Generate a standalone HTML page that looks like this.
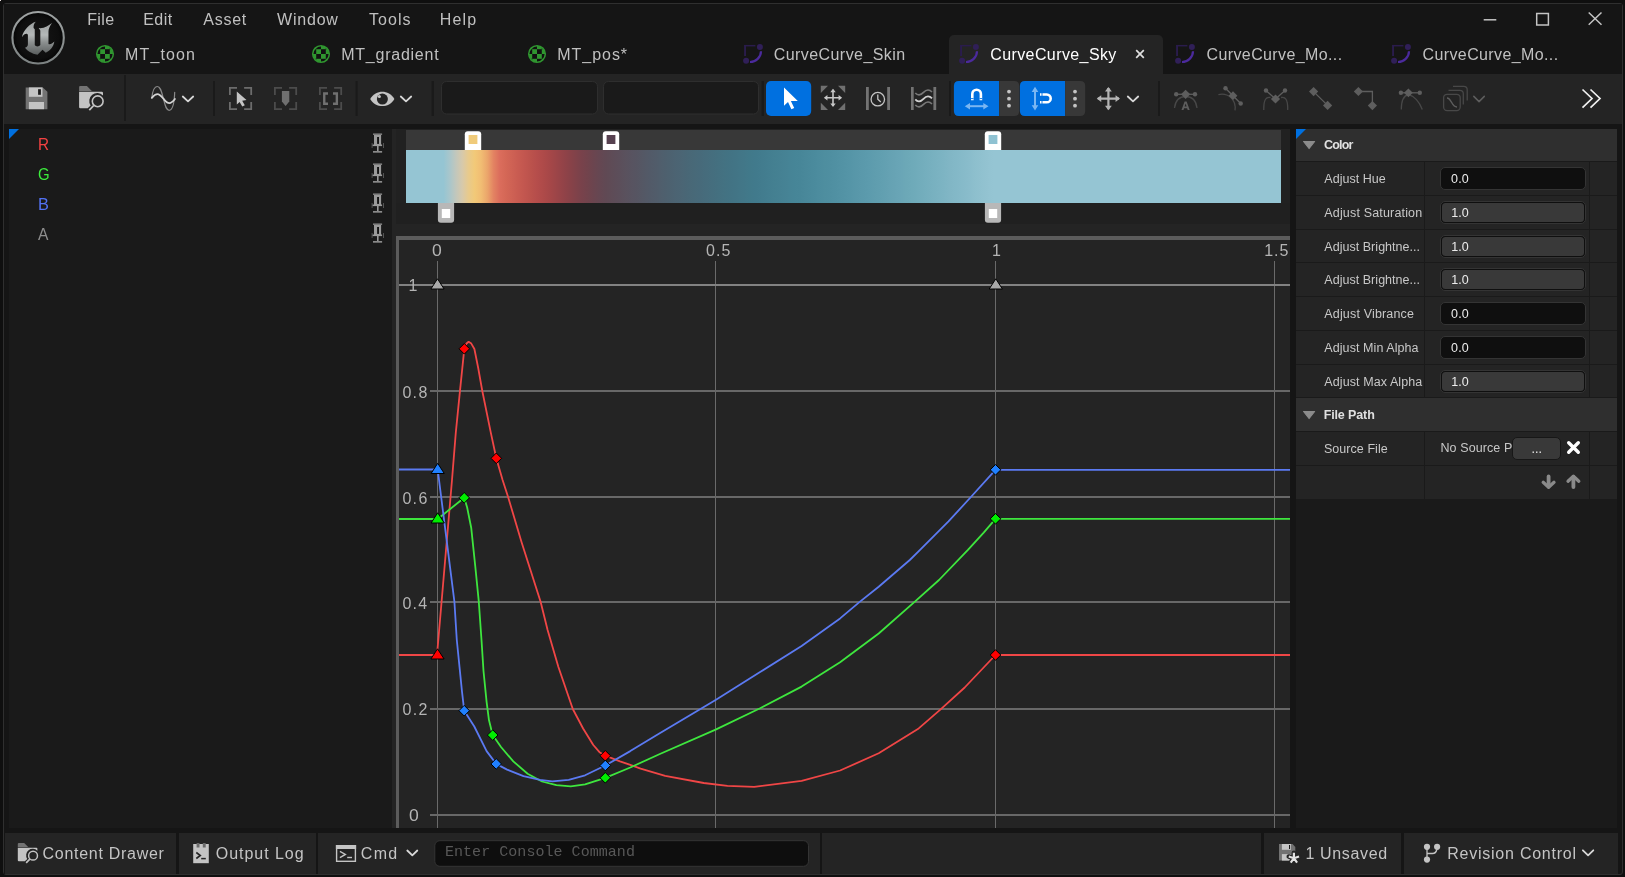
<!DOCTYPE html>
<html lang="en">
<head>
<meta charset="utf-8">
<title>CurveCurve_Sky</title>
<style>
*{box-sizing:border-box;margin:0;padding:0}
html,body{width:1625px;height:877px;overflow:hidden;background:#0f0f0f}
body{font-family:"Liberation Sans",sans-serif;color:#c0c0c0;position:relative;-webkit-font-smoothing:antialiased}
.abs{position:absolute}
#win{position:absolute;left:3px;top:3px;width:1620px;height:872px;border:1px solid #2f2f2f;border-radius:3px;background:#151515;overflow:hidden}
/* all children of #root are positioned in page coordinates */
#root{position:absolute;left:0;top:0;width:1625px;height:877px;will-change:transform}
.t{position:absolute;white-space:nowrap;line-height:1;transform-origin:0 0}
#titlebar{left:4px;top:4px;width:1618px;height:70px;background:#151515}
#toolbar{left:4px;top:74px;width:1618px;height:50px;background:#242424}
#leftpanel{left:9px;top:129px;width:383px;height:699px;background:#1a1a1a}
#midpanel{left:392px;top:129px;width:898px;height:699px;background:#242424}
#rightpanel{left:1296px;top:129px;width:321px;height:699px;background:#1a1a1a}
#statusbar{left:4px;top:833px;width:1614px;height:41px;background:#151515}
</style>
</head>
<body>
<div id="win"></div>
<div class="abs" style="left:0;top:0;width:1px;height:1px;background:#e8dede"></div>
<div id="root">
<div id="titlebar" class="abs"></div>
<div id="toolbar" class="abs"></div>
<div id="leftpanel" class="abs"></div>
<div id="midpanel" class="abs"></div>
<div id="rightpanel" class="abs"></div>
<div id="statusbar" class="abs"></div>
<svg class="abs" style="left:10px;top:10px;" width="56" height="56" viewBox="0 0 56 56">
<defs><linearGradient id="ug" x1="0" y1="0" x2="0" y2="1"><stop offset="0" stop-color="#9a9e9e"/><stop offset=".4" stop-color="#b4b8b8"/><stop offset=".62" stop-color="#8c9090"/><stop offset="1" stop-color="#5a5e5e"/></linearGradient>
<radialGradient id="ud" cx=".5" cy=".5" r=".5"><stop offset="0" stop-color="#161616"/><stop offset=".8" stop-color="#0e0e0e"/><stop offset="1" stop-color="#050505"/></radialGradient>
<linearGradient id="ur" x1="0" y1="0" x2="0" y2="1"><stop offset="0" stop-color="#a0a4a4"/><stop offset="1" stop-color="#7c8282"/></linearGradient></defs>
<circle cx="28.100" cy="27.750" r="25.700" fill="url(#ud)" stroke="url(#ur)" stroke-width="2.100"/>
<path fill="url(#ug)" d="M11.91 27.24C13.15 20.09 20.09 13.52 25.78 11.77C24.10 13.52 23.45 15.12 23.59 17.90L24.76 19.21L24.76 35.05C25.56 36.88 29.21 36.88 30.31 35.05L30.31 20.45L28.70 18.04C33.96 18.77 38.34 15.71 41.99 12.93C39.80 16.07 38.48 18.63 38.48 21.55L38.48 33.96C39.80 35.05 42.35 33.59 44.32 31.62C43.45 36.88 40.53 40.53 35.78 42.86L32.50 39.65L27.53 44.76C21.55 43.81 17.17 40.53 14.98 37.75C16.80 37.24 17.90 36.15 17.90 34.32L17.90 25.20C17.90 23.01 14.25 23.01 11.91 27.24Z"/>
</svg>
<span class="t" style="left:87.25px;top:12px;font-size:16px;letter-spacing:0.342px;color:#c0c0c0;font-family:'Liberation Sans',sans-serif;">File</span>
<span class="t" style="left:143.15px;top:12px;font-size:16px;letter-spacing:0.483px;color:#c0c0c0;font-family:'Liberation Sans',sans-serif;">Edit</span>
<span class="t" style="left:203.30px;top:12px;font-size:16px;letter-spacing:0.750px;color:#c0c0c0;font-family:'Liberation Sans',sans-serif;">Asset</span>
<span class="t" style="left:277.10px;top:12px;font-size:16px;letter-spacing:0.780px;color:#c0c0c0;font-family:'Liberation Sans',sans-serif;">Window</span>
<span class="t" style="left:369.05px;top:12px;font-size:16px;letter-spacing:1.019px;color:#c0c0c0;font-family:'Liberation Sans',sans-serif;">Tools</span>
<span class="t" style="left:439.75px;top:12px;font-size:16px;letter-spacing:1.167px;color:#c0c0c0;font-family:'Liberation Sans',sans-serif;">Help</span>
<div class="abs" style="left:949px;top:35px;width:214px;height:39px;background:#242424;border-radius:5px 5px 0 0;"></div>
<svg class="abs" style="left:95px;top:44px;" width="20" height="20" viewBox="0 0 20 20">
<defs><clipPath id="mc105"><circle cx="10" cy="10" r="8.200"/></clipPath></defs>
<circle cx="10" cy="10" r="8.300" fill="#111111"/>
<g clip-path="url(#mc105)" fill="#309630"><rect x="0.4" y="0.4" width="4.800" height="4.800"/><rect x="10.0" y="0.4" width="4.800" height="4.800"/><rect x="5.2" y="5.2" width="4.800" height="4.800"/><rect x="14.8" y="5.2" width="4.800" height="4.800"/><rect x="0.4" y="10.0" width="4.800" height="4.800"/><rect x="10.0" y="10.0" width="4.800" height="4.800"/><rect x="5.2" y="14.8" width="4.800" height="4.800"/><rect x="14.8" y="14.8" width="4.800" height="4.800"/></g>
<circle cx="10" cy="10" r="8.300" fill="none" stroke="#309630" stroke-width="1.500"/></svg>
<span class="t" style="left:125.05px;top:47px;font-size:16px;letter-spacing:1.138px;color:#c0c0c0;font-family:'Liberation Sans',sans-serif;">MT_toon</span>
<svg class="abs" style="left:311px;top:44px;" width="20" height="20" viewBox="0 0 20 20">
<defs><clipPath id="mc321"><circle cx="10" cy="10" r="8.200"/></clipPath></defs>
<circle cx="10" cy="10" r="8.300" fill="#111111"/>
<g clip-path="url(#mc321)" fill="#309630"><rect x="0.4" y="0.4" width="4.800" height="4.800"/><rect x="10.0" y="0.4" width="4.800" height="4.800"/><rect x="5.2" y="5.2" width="4.800" height="4.800"/><rect x="14.8" y="5.2" width="4.800" height="4.800"/><rect x="0.4" y="10.0" width="4.800" height="4.800"/><rect x="10.0" y="10.0" width="4.800" height="4.800"/><rect x="5.2" y="14.8" width="4.800" height="4.800"/><rect x="14.8" y="14.8" width="4.800" height="4.800"/></g>
<circle cx="10" cy="10" r="8.300" fill="none" stroke="#309630" stroke-width="1.500"/></svg>
<span class="t" style="left:341.25px;top:47px;font-size:16px;letter-spacing:0.750px;color:#c0c0c0;font-family:'Liberation Sans',sans-serif;">MT_gradient</span>
<svg class="abs" style="left:527px;top:44px;" width="20" height="20" viewBox="0 0 20 20">
<defs><clipPath id="mc537"><circle cx="10" cy="10" r="8.200"/></clipPath></defs>
<circle cx="10" cy="10" r="8.300" fill="#111111"/>
<g clip-path="url(#mc537)" fill="#309630"><rect x="0.4" y="0.4" width="4.800" height="4.800"/><rect x="10.0" y="0.4" width="4.800" height="4.800"/><rect x="5.2" y="5.2" width="4.800" height="4.800"/><rect x="14.8" y="5.2" width="4.800" height="4.800"/><rect x="0.4" y="10.0" width="4.800" height="4.800"/><rect x="10.0" y="10.0" width="4.800" height="4.800"/><rect x="5.2" y="14.8" width="4.800" height="4.800"/><rect x="14.8" y="14.8" width="4.800" height="4.800"/></g>
<circle cx="10" cy="10" r="8.300" fill="none" stroke="#309630" stroke-width="1.500"/></svg>
<span class="t" style="left:557.25px;top:47px;font-size:16px;letter-spacing:0.967px;color:#c0c0c0;font-family:'Liberation Sans',sans-serif;">MT_pos*</span>
<svg class="abs" style="left:743px;top:44px;" width="22" height="22" viewBox="0 0 22 22">
<path d="M1.100 1.700H12.400" fill="none" stroke="#2a1c4c" stroke-width="1.500"/><path d="M2.050 1V12.100" fill="none" stroke="#2a1c4c" stroke-width="1.900"/>
<path d="M7 18A11 11 0 0 0 18 7.200" fill="none" stroke="#4b2a9c" stroke-width="2.200"/>
<circle cx="16.900" cy="3" r="3" fill="#301f58"/>
<circle cx="3.100" cy="16.800" r="3" fill="#301f58"/></svg>
<span class="t" style="left:773.75px;top:47px;font-size:16px;letter-spacing:0.427px;color:#c0c0c0;font-family:'Liberation Sans',sans-serif;">CurveCurve_Skin</span>
<svg class="abs" style="left:959px;top:44px;" width="22" height="22" viewBox="0 0 22 22">
<path d="M1.100 1.700H12.400" fill="none" stroke="#2a1c4c" stroke-width="1.500"/><path d="M2.050 1V12.100" fill="none" stroke="#2a1c4c" stroke-width="1.900"/>
<path d="M7 18A11 11 0 0 0 18 7.200" fill="none" stroke="#4b2a9c" stroke-width="2.200"/>
<circle cx="16.900" cy="3" r="3" fill="#301f58"/>
<circle cx="3.100" cy="16.800" r="3" fill="#301f58"/></svg>
<span class="t" style="left:990.25px;top:47px;font-size:16px;letter-spacing:0.398px;color:#ffffff;font-family:'Liberation Sans',sans-serif;">CurveCurve_Sky</span>
<svg class="abs" style="left:1134px;top:48px;" width="12" height="12" viewBox="0 0 12 12"><path d="M2.200 2.200L9.800 9.800M9.800 2.200L2.200 9.800" stroke="#e0e0e0" stroke-width="1.7" fill="none"/></svg>
<svg class="abs" style="left:1175px;top:44px;" width="22" height="22" viewBox="0 0 22 22">
<path d="M1.100 1.700H12.400" fill="none" stroke="#2a1c4c" stroke-width="1.500"/><path d="M2.050 1V12.100" fill="none" stroke="#2a1c4c" stroke-width="1.900"/>
<path d="M7 18A11 11 0 0 0 18 7.200" fill="none" stroke="#4b2a9c" stroke-width="2.200"/>
<circle cx="16.900" cy="3" r="3" fill="#301f58"/>
<circle cx="3.100" cy="16.800" r="3" fill="#301f58"/></svg>
<span class="t" style="left:1206.55px;top:47px;font-size:16px;letter-spacing:0.385px;color:#c0c0c0;font-family:'Liberation Sans',sans-serif;">CurveCurve_Mo...</span>
<svg class="abs" style="left:1391px;top:44px;" width="22" height="22" viewBox="0 0 22 22">
<path d="M1.100 1.700H12.400" fill="none" stroke="#2a1c4c" stroke-width="1.500"/><path d="M2.050 1V12.100" fill="none" stroke="#2a1c4c" stroke-width="1.900"/>
<path d="M7 18A11 11 0 0 0 18 7.200" fill="none" stroke="#4b2a9c" stroke-width="2.200"/>
<circle cx="16.900" cy="3" r="3" fill="#301f58"/>
<circle cx="3.100" cy="16.800" r="3" fill="#301f58"/></svg>
<span class="t" style="left:1422.55px;top:47px;font-size:16px;letter-spacing:0.385px;color:#c0c0c0;font-family:'Liberation Sans',sans-serif;">CurveCurve_Mo...</span>
<svg class="abs" style="left:1479px;top:8px;" width="130" height="24" viewBox="0 0 130 24">
<path d="M4.700 11.800H17.300" stroke="#c4c4c4" stroke-width="1.500" fill="none"/>
<rect x="57.700" y="5.500" width="11.700" height="11.500" fill="none" stroke="#c4c4c4" stroke-width="1.500"/>
<path d="M109.700 4.500L122.500 16.800M122.500 4.500L109.700 16.800" stroke="#c4c4c4" stroke-width="1.500" fill="none"/></svg>
<svg class="abs" style="left:0;top:74px" width="1625" height="50" viewBox="0 74 1625 50"><rect x="124" y="75" width="2" height="46" fill="#1a1a1a"/><rect x="213" y="81" width="2" height="35" fill="#1a1a1a"/><rect x="355.6" y="81" width="2" height="35" fill="#1a1a1a"/><rect x="431.5" y="81" width="2.5" height="35" fill="#1a1a1a"/><rect x="761.5" y="81" width="2.5" height="35" fill="#1a1a1a"/><rect x="949" y="81" width="2" height="35" fill="#1a1a1a"/><rect x="1158" y="81" width="2" height="35" fill="#1a1a1a"/><path d="M25.700 87.400H42.800L47.400 91.800V109.200H25.700Z" fill="#737373"/><rect x="28.900" y="87.400" width="13.600" height="9.400" fill="#c4c4c4"/><rect x="38.100" y="89.200" width="2.800" height="5.600" fill="#1a1a1a"/><rect x="28.900" y="102" width="15.100" height="7.200" fill="#c4c4c4"/><g transform="translate(79.1,85.9) scale(1.0)"><path d="M0 1.200Q0 0 1.200 0H7.800L12.700 5H0Z" fill="#737373"/><path d="M0 5.900H22.700Q23.900 5.900 23.900 7.100V9.500A8 8 0 0 0 11.500 19.500L8.600 22.300H1.200Q0 22.300 0 21.100Z" fill="#c4c4c4"/><circle cx="18.600" cy="15.400" r="5.400" fill="none" stroke="#c4c4c4" stroke-width="1.600"/><path d="M14.600 19.600L10.200 24.300" stroke="#c4c4c4" stroke-width="1.800" fill="none"/></g><path d="M151.800 97.900C152.600 91 154 86.500 157.200 86.500C160.600 86.500 161.600 92 163.400 98.700C165.200 105.400 166 110.300 169.100 110.300C172.800 110.300 174.300 103 174.700 92.300" fill="none" stroke="#8a8a8a" stroke-width="1.200" stroke-linecap="round"/><path d="M151.800 97.900C153.800 95.500 155.600 94.200 157.600 94.200S161 96 163.400 98.700S167 103.100 169.300 103.100S173 101.500 174.900 99" fill="none" stroke="#d4d4d4" stroke-width="1.800" stroke-linecap="round"/><path d="M182.8 96.5L188.0 101.3L193.2 96.5" fill="none" stroke="#d8d8d8" stroke-width="1.8" stroke-linecap="round" stroke-linejoin="round"/><path d="M237 87.9H229.9V95" fill="none" stroke="#6c6c6c" stroke-width="1.800"/><path d="M244.1 87.9H251.2V95" fill="none" stroke="#6c6c6c" stroke-width="1.800"/><path d="M237 109.19999999999999H229.9V102.1" fill="none" stroke="#6c6c6c" stroke-width="1.800"/><path d="M244.1 109.19999999999999H251.2V102.1" fill="none" stroke="#6c6c6c" stroke-width="1.800"/><path d="M236.800 91.500V104.500L239.600 102L242.300 106.400L244.800 105.300L242.200 100.700L246.500 99.900Z" fill="#c4c4c4"/><path d="M282 87.9H274.9V95" fill="none" stroke="#4c4c4c" stroke-width="1.800"/><path d="M289.1 87.9H296.20000000000005V95" fill="none" stroke="#4c4c4c" stroke-width="1.800"/><path d="M282 109.19999999999999H274.9V102.1" fill="none" stroke="#4c4c4c" stroke-width="1.800"/><path d="M289.1 109.19999999999999H296.20000000000005V102.1" fill="none" stroke="#4c4c4c" stroke-width="1.800"/><path d="M281.900 91H289.300V101.500L285.600 106L281.900 101.500Z" fill="#707070"/><path d="M327 87.9H319.9V95" fill="none" stroke="#4c4c4c" stroke-width="1.800"/><path d="M334.1 87.9H341.20000000000005V95" fill="none" stroke="#4c4c4c" stroke-width="1.800"/><path d="M327 109.19999999999999H319.9V102.1" fill="none" stroke="#4c4c4c" stroke-width="1.800"/><path d="M334.1 109.19999999999999H341.20000000000005V102.1" fill="none" stroke="#4c4c4c" stroke-width="1.800"/><path d="M328 93.450H324.250V103.750H328" fill="none" stroke="#707070" stroke-width="2.400"/><path d="M333 93.450H336.850V103.750H333" fill="none" stroke="#707070" stroke-width="2.400"/><path d="M370.200 98.900C376 89.300 388.600 89.300 394.400 98.900C388.600 108.500 376 108.500 370.200 98.900Z" fill="#c4c4c4"/><circle cx="382.400" cy="99.100" r="5.500" fill="#242424"/><circle cx="379.400" cy="96.500" r="1.500" fill="#c4c4c4"/><path d="M400.8 96.5L406.0 101.3L411.2 96.5" fill="none" stroke="#d8d8d8" stroke-width="1.8" stroke-linecap="round" stroke-linejoin="round"/><rect x="441.500" y="81.500" width="156" height="32.500" rx="5" fill="#1a1a1a" stroke="#2e2e2e"/><rect x="603.500" y="81.500" width="155" height="32.500" rx="5" fill="#1a1a1a" stroke="#2e2e2e"/><rect x="766" y="81" width="45.200" height="35" rx="5" fill="#0070e0"/><path d="M784 87.500V105.800L788 102L791.400 109.300L794.200 108L790.900 100.900H797.800Z" fill="#fff"/><path d="M820.800 85.800H828L820.800 93ZM845.200 85.800V93L838 85.800ZM820.800 110V102.800L828 110ZM845.200 110H838L845.200 102.800Z" fill="#707070"/><path d="M824.9 97.8H841.1M833 89.7V105.89999999999999" stroke="#c8c8c8" stroke-width="1.6" fill="none"/><path d="M842.1 97.8L838.59 100.5L838.59 95.1Z" fill="#c8c8c8"/><path d="M823.9 97.8L827.41 95.1L827.41 100.5Z" fill="#c8c8c8"/><path d="M833.0 106.89999999999999L830.3 103.38999999999999L835.7 103.38999999999999Z" fill="#c8c8c8"/><path d="M833.0 88.7L835.7 92.21000000000001L830.3 92.21000000000001Z" fill="#c8c8c8"/><rect x="866" y="87" width="2.800" height="23" fill="#737373"/><rect x="887.200" y="87" width="2.800" height="23" fill="#737373"/><circle cx="877.800" cy="99.200" r="6.750" fill="none" stroke="#c4c4c4" stroke-width="1.300"/><path d="M877.800 94.500V99.200L880.800 102" fill="none" stroke="#c4c4c4" stroke-width="1.300"/><rect x="911" y="87" width="2.700" height="23" fill="#737373"/><rect x="933.400" y="87" width="2.800" height="23" fill="#737373"/><path d="M915.300 93.0C917.500 95.60000000000001 920.500 95.60000000000001 923.500 92.4S929.500 89.2 932 92.0" fill="none" stroke="#787878" stroke-width="1.6"/><path d="M915.300 99.39999999999999C917.500 102.0 920.500 102.0 923.500 98.8S929.500 95.6 932 98.39999999999999" fill="none" stroke="#d0d0d0" stroke-width="1.8"/><path d="M915.300 105.0C917.500 107.60000000000001 920.500 107.60000000000001 923.500 104.4S929.500 101.2 932 104.0" fill="none" stroke="#787878" stroke-width="1.6"/><path d="M958.9 81H999.1999999999999V116H958.9Q953.9 116 953.9 111V86Q953.9 81 958.9 81Z" fill="#0070e0"/><path d="M999.1999999999999 81H1014.1999999999999Q1019.1999999999999 81 1019.1999999999999 86V111Q1019.1999999999999 116 1014.1999999999999 116H999.1999999999999Z" fill="#383838"/><circle cx="1009.0" cy="91.6" r="1.900" fill="#c4c4c4"/><circle cx="1009.0" cy="98.7" r="1.900" fill="#c4c4c4"/><circle cx="1009.0" cy="105.7" r="1.900" fill="#c4c4c4"/><path d="M1024.9 81H1065.2V116H1024.9Q1019.9 116 1019.9 111V86Q1019.9 81 1024.9 81Z" fill="#0070e0"/><path d="M1065.2 81H1080.2Q1085.2 81 1085.2 86V111Q1085.2 116 1080.2 116H1065.2Z" fill="#383838"/><circle cx="1075.0" cy="91.6" r="1.900" fill="#c4c4c4"/><circle cx="1075.0" cy="98.7" r="1.900" fill="#c4c4c4"/><circle cx="1075.0" cy="105.7" r="1.900" fill="#c4c4c4"/><path d="M972.300 100.300V94A4.300 4.300 0 0 1 980.900 94V100.300" fill="none" stroke="#fff" stroke-width="2.600"/><path d="M971 98.600H973.600M979.600 98.600H982.200" stroke="#0070e0" stroke-width="0.900"/><path d="M968 106.200H985.500" stroke="#7ab6f2" stroke-width="2"/><path d="M964.800 106.200L970 102.900V109.500ZM988.500 106.200L983.300 102.900V109.500Z" fill="#7ab6f2"/><path d="M1035 90V107" stroke="#7ab6f2" stroke-width="2"/><path d="M1035 86.700L1031.700 91.900H1038.300ZM1035 110.400L1031.700 105.200H1038.300Z" fill="#7ab6f2"/><path d="M1040 94.500H1046.800A3.900 3.900 0 0 1 1046.800 102.300H1040" fill="none" stroke="#fff" stroke-width="2.600"/><path d="M1042 93V96M1042 100.800V103.800" stroke="#0070e0" stroke-width="0.900"/><path d="M1097.8000000000002 98.6H1119.0M1108.4 88.0V109.19999999999999" stroke="#b4b4b4" stroke-width="2.2" fill="none"/><path d="M1120.0 98.6L1115.58 102.0L1115.58 95.19999999999999Z" fill="#b4b4b4"/><path d="M1096.8000000000002 98.6L1101.2200000000003 95.19999999999999L1101.2200000000003 102.0Z" fill="#b4b4b4"/><path d="M1108.4 110.19999999999999L1105.0 105.77999999999999L1111.8000000000002 105.77999999999999Z" fill="#b4b4b4"/><path d="M1108.4 87.0L1111.8000000000002 91.42L1105.0 91.42Z" fill="#b4b4b4"/><path d="M1127.8 96.5L1133.0 101.3L1138.2 96.5" fill="none" stroke="#d8d8d8" stroke-width="1.8" stroke-linecap="round" stroke-linejoin="round"/><path d="M1174.500 108C1175.500 100 1180 96.500 1185.600 96.500S1196 100 1197 108" fill="none" stroke="#484848" stroke-width="1.300"/><path d="M1176 94.300H1195.200" stroke="#5e5e5e" stroke-width="1.300"/><circle cx="1176.200" cy="94.300" r="2.200" fill="#5e5e5e"/><circle cx="1195" cy="94.300" r="2.200" fill="#5e5e5e"/><path d="M1185.6 89.7L1190.1999999999998 94.3L1185.6 98.89999999999999L1181.0 94.3Z" fill="#5e5e5e"/><path d="M1181.500 110L1184.600 101.500H1186.600L1189.700 110H1187.700L1187.100 108.200H1184.100L1183.500 110ZM1184.600 106.600H1186.600L1185.600 103.600Z" fill="#5e5e5e"/><path d="M1218.400 94.600C1228 92.500 1236.500 99.500 1235 110.300" fill="none" stroke="#484848" stroke-width="1.300"/><path d="M1225.500 88.200L1240.700 103.500" stroke="#5e5e5e" stroke-width="1.300"/><circle cx="1225.500" cy="88.200" r="2.200" fill="#5e5e5e"/><circle cx="1240.700" cy="103.500" r="2.200" fill="#5e5e5e"/><path d="M1233 91.300L1237.400 95.700L1233 100.100L1228.600 95.700Z" fill="#5e5e5e"/><path d="M1263.800 110C1263.500 99 1266.500 96.500 1270.500 97.500M1287.700 110C1288 99 1285 96.500 1281 97.500" fill="none" stroke="#484848" stroke-width="1.300"/><path d="M1266 90.500L1275.500 99L1285 90.500" fill="none" stroke="#5e5e5e" stroke-width="1.300"/><circle cx="1266" cy="90.500" r="2.200" fill="#5e5e5e"/><circle cx="1285" cy="90.500" r="2.200" fill="#5e5e5e"/><path d="M1275.5 94.4L1280.1 99L1275.5 103.6L1270.9 99Z" fill="#5e5e5e"/><path d="M1313.600 91.600L1327.600 105.400" stroke="#5e5e5e" stroke-width="1.300"/><path d="M1313.6 87.0L1318.1999999999998 91.6L1313.6 96.19999999999999L1309.0 91.6Z" fill="#5e5e5e"/><path d="M1327.6 100.80000000000001L1332.1999999999998 105.4L1327.6 110.0L1323.0 105.4Z" fill="#5e5e5e"/><path d="M1358.400 91.500H1372.400V105.600" fill="none" stroke="#5e5e5e" stroke-width="1.300"/><path d="M1358.4 86.9L1363.0 91.5L1358.4 96.1L1353.8000000000002 91.5Z" fill="#5e5e5e"/><path d="M1372.4 101.0L1377.0 105.6L1372.4 110.19999999999999L1367.8000000000002 105.6Z" fill="#5e5e5e"/><path d="M1401.300 109.500C1401.300 101 1404 95.500 1408.500 94.500C1414 96 1419.500 102 1422.300 109.500" fill="none" stroke="#484848" stroke-width="1.300"/><path d="M1401 92.800H1420" stroke="#5e5e5e" stroke-width="1.300"/><circle cx="1400.900" cy="92.800" r="2.200" fill="#5e5e5e"/><circle cx="1419.800" cy="92.800" r="2.200" fill="#5e5e5e"/><path d="M1408.4 88.39999999999999L1412.8000000000002 92.8L1408.4 97.2L1404.0 92.8Z" fill="#5e5e5e"/><path d="M1453 86.400H1463.700Q1467.200 86.400 1467.200 89.900V100.500" fill="none" stroke="#484848" stroke-width="1.300"/><path d="M1448.500 90.300H1459.800Q1463.300 90.300 1463.300 93.800V104.500" fill="none" stroke="#484848" stroke-width="1.300"/><rect x="1443.600" y="94.300" width="16.600" height="16.300" rx="3.500" fill="none" stroke="#484848" stroke-width="1.300"/><path d="M1447 98C1451.500 98 1451.500 107 1457 107" fill="none" stroke="#5e5e5e" stroke-width="1.300"/><path d="M1473.8 96.4L1479.05 101.6L1484.3 96.4" fill="none" stroke="#5e5e5e" stroke-width="1.5" stroke-linecap="round" stroke-linejoin="round"/><path d="M1582.500 89.500L1592 98.500L1582.500 107.700M1590.500 89.500L1600 98.500L1590.500 107.700" fill="none" stroke="#f0f0f0" stroke-width="1.700"/></svg>
<svg class="abs" style="left:9px;top:129px;" width="10" height="10" viewBox="0 0 10 10"><path d="M0 0H10L0 10Z" fill="#0070e0"/></svg>
<span class="t" style="left:37.71px;top:137px;font-size:16px;letter-spacing:0.000px;color:#f54242;font-family:'Liberation Sans',sans-serif;transform:scaleX(0.956);">R</span>
<svg class="abs" style="left:371px;top:132px;" width="14" height="22" viewBox="0 0 14 22">
<path d="M2 2.200H11.100" stroke="#7c7c7c" stroke-width="1.600"/>
<path d="M3 3H10.100V13.200H3Z" fill="#9a9a9a"/><rect x="6.100" y="5" width="1.900" height="6.900" fill="#151515"/>
<path d="M1.400 13.300H11.100" stroke="#9a9a9a" stroke-width="1.600"/>
<path d="M1.100 11V16M12.500 11V16" stroke="#5a5a5a" stroke-width="0.900"/>
<path d="M6.800 14V19.200" stroke="#9a9a9a" stroke-width="1.600"/>
<path d="M2 19.850H11.100" stroke="#8a8a8a" stroke-width="1.700"/></svg>
<span class="t" style="left:38.10px;top:167px;font-size:16px;letter-spacing:0.000px;color:#3cee3c;font-family:'Liberation Sans',sans-serif;transform:scaleX(0.933);">G</span>
<svg class="abs" style="left:371px;top:162px;" width="14" height="22" viewBox="0 0 14 22">
<path d="M2 2.200H11.100" stroke="#7c7c7c" stroke-width="1.600"/>
<path d="M3 3H10.100V13.200H3Z" fill="#9a9a9a"/><rect x="6.100" y="5" width="1.900" height="6.900" fill="#151515"/>
<path d="M1.400 13.300H11.100" stroke="#9a9a9a" stroke-width="1.600"/>
<path d="M1.100 11V16M12.500 11V16" stroke="#5a5a5a" stroke-width="0.900"/>
<path d="M6.800 14V19.200" stroke="#9a9a9a" stroke-width="1.600"/>
<path d="M2 19.850H11.100" stroke="#8a8a8a" stroke-width="1.700"/></svg>
<span class="t" style="left:37.92px;top:197px;font-size:16px;letter-spacing:0.000px;color:#5272f5;font-family:'Liberation Sans',sans-serif;transform:scaleX(1.020);">B</span>
<svg class="abs" style="left:371px;top:192px;" width="14" height="22" viewBox="0 0 14 22">
<path d="M2 2.200H11.100" stroke="#7c7c7c" stroke-width="1.600"/>
<path d="M3 3H10.100V13.200H3Z" fill="#9a9a9a"/><rect x="6.100" y="5" width="1.900" height="6.900" fill="#151515"/>
<path d="M1.400 13.300H11.100" stroke="#9a9a9a" stroke-width="1.600"/>
<path d="M1.100 11V16M12.500 11V16" stroke="#5a5a5a" stroke-width="0.900"/>
<path d="M6.800 14V19.200" stroke="#9a9a9a" stroke-width="1.600"/>
<path d="M2 19.850H11.100" stroke="#8a8a8a" stroke-width="1.700"/></svg>
<span class="t" style="left:38.10px;top:227px;font-size:16px;letter-spacing:0.000px;color:#8e8e8e;font-family:'Liberation Sans',sans-serif;transform:scaleX(0.977);">A</span>
<svg class="abs" style="left:371px;top:222px;" width="14" height="22" viewBox="0 0 14 22">
<path d="M2 2.200H11.100" stroke="#7c7c7c" stroke-width="1.600"/>
<path d="M3 3H10.100V13.200H3Z" fill="#9a9a9a"/><rect x="6.100" y="5" width="1.900" height="6.900" fill="#151515"/>
<path d="M1.400 13.300H11.100" stroke="#9a9a9a" stroke-width="1.600"/>
<path d="M1.100 11V16M12.500 11V16" stroke="#5a5a5a" stroke-width="0.900"/>
<path d="M6.800 14V19.200" stroke="#9a9a9a" stroke-width="1.600"/>
<path d="M2 19.850H11.100" stroke="#8a8a8a" stroke-width="1.700"/></svg>
<div class="abs" style="left:396px;top:129px;width:894px;height:74px;background:#212121;"></div>
<div class="abs" style="left:396px;top:203px;width:894px;height:21px;background:#202020;"></div>
<div class="abs" style="left:406px;top:130px;width:875px;height:20px;background:#383838;"></div>
<div class="abs" style="left:406px;top:150px;width:875px;height:53px;background:linear-gradient(90deg,rgb(149,197,211) 0.00%,rgb(149,197,211) 0.71%,rgb(149,197,211) 1.43%,rgb(149,197,211) 2.14%,rgb(149,197,211) 2.86%,rgb(149,197,211) 3.57%,rgb(149,197,211) 4.29%,rgb(169,198,203) 5.00%,rgb(194,199,188) 5.71%,rgb(215,201,171) 6.43%,rgb(232,202,140) 7.14%,rgb(242,201,120) 7.86%,rgb(241,189,115) 8.57%,rgb(235,166,107) 9.29%,rgb(227,131,98) 10.00%,rgb(219,109,92) 10.71%,rgb(212,103,86) 11.43%,rgb(206,97,84) 12.14%,rgb(200,91,81) 12.86%,rgb(194,86,79) 13.57%,rgb(187,82,76) 14.29%,rgb(181,77,75) 15.00%,rgb(174,74,73) 15.71%,rgb(166,71,72) 16.43%,rgb(157,69,72) 17.14%,rgb(148,67,72) 17.86%,rgb(139,66,72) 18.57%,rgb(130,66,73) 19.29%,rgb(121,66,75) 20.00%,rgb(114,67,76) 20.71%,rgb(107,69,79) 21.43%,rgb(101,71,82) 22.14%,rgb(96,73,84) 22.86%,rgb(94,76,87) 23.57%,rgb(92,78,90) 24.29%,rgb(90,81,93) 25.00%,rgb(88,83,96) 25.71%,rgb(86,85,98) 26.43%,rgb(84,88,101) 27.14%,rgb(82,90,104) 27.86%,rgb(81,92,106) 28.57%,rgb(79,95,109) 29.29%,rgb(77,97,111) 30.00%,rgb(76,99,114) 30.71%,rgb(75,101,116) 31.43%,rgb(73,103,118) 32.14%,rgb(72,105,120) 32.86%,rgb(71,106,122) 33.57%,rgb(70,108,124) 34.29%,rgb(69,110,126) 35.00%,rgb(68,112,128) 35.71%,rgb(67,114,130) 36.43%,rgb(66,115,132) 37.14%,rgb(66,117,134) 37.86%,rgb(66,119,136) 38.57%,rgb(65,121,138) 39.29%,rgb(65,122,140) 40.00%,rgb(66,124,142) 40.71%,rgb(67,126,144) 41.43%,rgb(68,128,145) 42.14%,rgb(69,129,147) 42.86%,rgb(70,131,149) 43.57%,rgb(70,133,151) 44.29%,rgb(71,134,152) 45.00%,rgb(73,136,154) 45.71%,rgb(74,138,156) 46.43%,rgb(76,140,158) 47.14%,rgb(78,142,159) 47.86%,rgb(79,143,161) 48.57%,rgb(81,145,163) 49.29%,rgb(83,147,165) 50.00%,rgb(85,149,167) 50.71%,rgb(88,151,169) 51.43%,rgb(90,153,171) 52.14%,rgb(92,155,173) 52.86%,rgb(95,157,174) 53.57%,rgb(97,159,176) 54.29%,rgb(100,161,178) 55.00%,rgb(103,163,180) 55.71%,rgb(105,165,182) 56.43%,rgb(108,168,183) 57.14%,rgb(110,170,185) 57.86%,rgb(113,172,187) 58.57%,rgb(116,174,189) 59.29%,rgb(119,176,191) 60.00%,rgb(122,178,193) 60.71%,rgb(125,180,195) 61.43%,rgb(129,182,197) 62.14%,rgb(131,184,199) 62.86%,rgb(134,186,201) 63.57%,rgb(137,188,203) 64.29%,rgb(141,191,205) 65.00%,rgb(144,193,207) 65.71%,rgb(147,195,209) 66.43%,rgb(149,197,211) 67.14%,rgb(149,197,211) 67.86%,rgb(149,197,211) 68.57%,rgb(149,197,211) 69.29%,rgb(149,197,211) 70.00%,rgb(149,197,211) 70.71%,rgb(149,197,211) 71.43%,rgb(149,197,211) 72.14%,rgb(149,197,211) 72.86%,rgb(149,197,211) 73.57%,rgb(149,197,211) 74.29%,rgb(149,197,211) 75.00%,rgb(149,197,211) 75.71%,rgb(149,197,211) 76.43%,rgb(149,197,211) 77.14%,rgb(149,197,211) 77.86%,rgb(149,197,211) 78.57%,rgb(149,197,211) 79.29%,rgb(149,197,211) 80.00%,rgb(149,197,211) 80.71%,rgb(149,197,211) 81.43%,rgb(149,197,211) 82.14%,rgb(149,197,211) 82.86%,rgb(149,197,211) 83.57%,rgb(149,197,211) 84.29%,rgb(149,197,211) 85.00%,rgb(149,197,211) 85.71%,rgb(149,197,211) 86.43%,rgb(149,197,211) 87.14%,rgb(149,197,211) 87.86%,rgb(149,197,211) 88.57%,rgb(149,197,211) 89.29%,rgb(149,197,211) 90.00%,rgb(149,197,211) 90.71%,rgb(149,197,211) 91.43%,rgb(149,197,211) 92.14%,rgb(149,197,211) 92.86%,rgb(149,197,211) 93.57%,rgb(149,197,211) 94.29%,rgb(149,197,211) 95.00%,rgb(149,197,211) 95.71%,rgb(149,197,211) 96.43%,rgb(149,197,211) 97.14%,rgb(149,197,211) 97.86%,rgb(149,197,211) 98.57%,rgb(149,197,211) 99.29%,rgb(149,197,211) 100.00%);"></div>
<svg class="abs" style="left:463.5px;top:131px;" width="18" height="19" viewBox="0 0 18 19"><path d="M0.800 19V3.200Q0.800 0.200 3.800 0.200H14.200Q17.200 0.200 17.200 3.200V19Z" fill="#ffffff"/><rect x="4.600" y="4" width="8.800" height="9" fill="#f0cb7a"/></svg>
<svg class="abs" style="left:601.5px;top:131px;" width="18" height="19" viewBox="0 0 18 19"><path d="M0.800 19V3.200Q0.800 0.200 3.800 0.200H14.200Q17.200 0.200 17.200 3.200V19Z" fill="#ffffff"/><rect x="4.600" y="4" width="8.800" height="9" fill="#574150"/></svg>
<svg class="abs" style="left:984px;top:131px;" width="18" height="19" viewBox="0 0 18 19"><path d="M0.800 19V3.200Q0.800 0.200 3.800 0.200H14.200Q17.200 0.200 17.200 3.200V19Z" fill="#ffffff"/><rect x="4.600" y="4" width="8.800" height="9" fill="#8fc2d2"/></svg>
<svg class="abs" style="left:437px;top:203px;" width="18" height="21" viewBox="0 0 18 21"><path d="M0.900 0V16.800Q0.900 19.800 3.900 19.800H14.100Q17.100 19.800 17.100 16.800V0Z" fill="#b8b8b8"/><rect x="4.800" y="6" width="8.400" height="9" fill="#ffffff"/></svg>
<svg class="abs" style="left:984px;top:203px;" width="18" height="21" viewBox="0 0 18 21"><path d="M0.900 0V16.800Q0.900 19.800 3.900 19.800H14.100Q17.100 19.800 17.100 16.800V0Z" fill="#b8b8b8"/><rect x="4.800" y="6" width="8.400" height="9" fill="#ffffff"/></svg>
<svg class="abs" style="left:392px;top:236px" width="898" height="592" viewBox="392 236 898 592"><rect x="396" y="236" width="894" height="4" fill="#5c5c5c"/><rect x="396" y="236" width="3" height="592" fill="#5c5c5c"/><rect x="437" y="261" width="1" height="567" fill="#6a6a6a"/><rect x="715" y="261" width="1" height="567" fill="#6a6a6a"/><rect x="995" y="261" width="1" height="567" fill="#6a6a6a"/><rect x="1274" y="261" width="1" height="567" fill="#6a6a6a"/><rect x="399" y="284" width="891" height="2" fill="#828282"/><rect x="430" y="390" width="860" height="2" fill="#686868"/><rect x="430" y="496" width="860" height="2" fill="#686868"/><rect x="430" y="601" width="860" height="2" fill="#686868"/><rect x="430" y="708" width="860" height="2" fill="#686868"/><rect x="430" y="814" width="860" height="2" fill="#686868"/><path d="M399.0 655.0L437.0 655.0L438.3 640.0L452.0 480.0L455.8 432.6L460.0 390.7L464.3 348.8L466.3 343.8L468.6 341.8L471.3 343.6L474.4 349.0L478.2 368.0L482.3 391.0L490.8 432.6L496.3 458.3L502.6 480.0L508.1 497.0L521.5 542.0L540.6 601.7L547.6 630.0L558.4 667.0L572.8 709.0L583.1 728.5L593.3 745.0L599.5 752.2L605.3 755.6L620.0 761.4L629.6 764.6L640.6 768.6L665.2 775.8L703.8 783.0L727.5 785.9L754.2 786.8L801.6 780.9L840.1 770.5L878.7 753.3L918.7 728.4L940.9 709.1L964.7 687.5L995.5 655.0L1290.0 655.0" fill="none" stroke="#f04646" stroke-width="1.800" stroke-linejoin="round"/><path d="M399.0 519.0L437.7 519.0L464.2 497.8L467.1 507.2L471.2 527.7L475.3 566.7L478.8 601.7L481.5 640.0L483.5 671.0L486.6 701.9L489.0 720.3L492.7 735.1L501.0 747.0L513.3 761.4L527.6 773.7L542.0 781.5L556.4 785.2L570.8 786.4L585.1 784.4L605.3 777.8L630.3 767.5L659.3 754.2L715.6 729.6L760.1 708.2L801.6 686.6L840.1 662.3L878.7 633.5L914.3 602.1L939.0 580.0L967.7 550.1L983.7 532.6L995.5 518.8L1290.0 518.8" fill="none" stroke="#3ee63e" stroke-width="1.800" stroke-linejoin="round"/><path d="M399.0 469.5L437.7 469.5L454.4 601.7L456.8 640.0L462.0 691.6L464.2 710.7L474.3 726.5L486.6 751.1L496.2 763.9L507.1 769.6L523.5 776.2L540.0 779.9L552.3 781.3L568.7 779.9L585.1 775.3L605.3 765.5L630.3 751.1L659.3 733.4L715.6 699.9L760.1 672.1L801.6 646.0L840.1 618.4L859.4 602.1L878.7 586.7L909.8 560.0L919.8 550.1L948.5 521.4L970.9 497.0L995.5 469.8L1290.0 469.8" fill="none" stroke="#5b7af2" stroke-width="1.800" stroke-linejoin="round"/><path d="M437.5 278.8L444.1 289H430.9Z" fill="#a8a8a8" stroke="#000" stroke-width="1"/><path d="M995.8 278.8L1002.4 289H989.1999999999999Z" fill="#a8a8a8" stroke="#000" stroke-width="1"/><path d="M437.5 648.8L444.1 659H430.9Z" fill="#ff0000" stroke="#000" stroke-width="1"/><path d="M437.7 512.8L444.3 523H431.09999999999997Z" fill="#00ee00" stroke="#000" stroke-width="1"/><path d="M437.7 463.3L444.3 473.5H431.09999999999997Z" fill="#2080ff" stroke="#000" stroke-width="1"/><path d="M464.3 343.5L469.6 348.8L464.3 354.1L459.0 348.8Z" fill="#ff0000" stroke="#000" stroke-width="1"/><path d="M496.3 453.0L501.6 458.3L496.3 463.6L491.0 458.3Z" fill="#ff0000" stroke="#000" stroke-width="1"/><path d="M605.3 750.5L610.5999999999999 755.8L605.3 761.0999999999999L600.0 755.8Z" fill="#ff0000" stroke="#000" stroke-width="1"/><path d="M995.5 649.7L1000.8 655L995.5 660.3L990.2 655Z" fill="#ff0000" stroke="#000" stroke-width="1"/><path d="M605.3 760.2L610.5999999999999 765.5L605.3 770.8L600.0 765.5Z" fill="#2080ff" stroke="#000" stroke-width="1"/><path d="M464.2 705.4000000000001L469.5 710.7L464.2 716.0L458.9 710.7Z" fill="#2080ff" stroke="#000" stroke-width="1"/><path d="M496.2 758.6L501.5 763.9L496.2 769.1999999999999L490.9 763.9Z" fill="#2080ff" stroke="#000" stroke-width="1"/><path d="M995.5 464.5L1000.8 469.8L995.5 475.1L990.2 469.8Z" fill="#2080ff" stroke="#000" stroke-width="1"/><path d="M464.2 492.5L469.5 497.8L464.2 503.1L458.9 497.8Z" fill="#00ee00" stroke="#000" stroke-width="1"/><path d="M492.7 729.8000000000001L498.0 735.1L492.7 740.4L487.4 735.1Z" fill="#00ee00" stroke="#000" stroke-width="1"/><path d="M605.3 772.5L610.5999999999999 777.8L605.3 783.0999999999999L600.0 777.8Z" fill="#00ee00" stroke="#000" stroke-width="1"/><path d="M995.5 513.5L1000.8 518.8L995.5 524.0999999999999L990.2 518.8Z" fill="#00ee00" stroke="#000" stroke-width="1"/></svg>
<span class="t" style="left:432.31px;top:243px;font-size:16px;letter-spacing:0.000px;color:#b4b4b4;font-family:'Liberation Sans',sans-serif;transform:scaleX(1.097);">0</span>
<span class="t" style="left:705.88px;top:243px;font-size:16px;letter-spacing:1.200px;color:#b4b4b4;font-family:'Liberation Sans',sans-serif;">0.5</span>
<span class="t" style="left:991.88px;top:243px;font-size:16px;letter-spacing:0.000px;color:#b4b4b4;font-family:'Liberation Sans',sans-serif;">1</span>
<span class="t" style="left:1264.17px;top:243px;font-size:16px;letter-spacing:0.950px;color:#b4b4b4;font-family:'Liberation Sans',sans-serif;">1.5</span>
<span class="t" style="left:408.38px;top:278px;font-size:16px;letter-spacing:0.000px;color:#b4b4b4;font-family:'Liberation Sans',sans-serif;">1</span>
<span class="t" style="left:402.38px;top:385px;font-size:16px;letter-spacing:1.350px;color:#b4b4b4;font-family:'Liberation Sans',sans-serif;">0.8</span>
<span class="t" style="left:402.38px;top:491px;font-size:16px;letter-spacing:1.350px;color:#b4b4b4;font-family:'Liberation Sans',sans-serif;">0.6</span>
<span class="t" style="left:402.38px;top:596px;font-size:16px;letter-spacing:1.225px;color:#b4b4b4;font-family:'Liberation Sans',sans-serif;">0.4</span>
<span class="t" style="left:402.38px;top:702px;font-size:16px;letter-spacing:1.412px;color:#b4b4b4;font-family:'Liberation Sans',sans-serif;">0.2</span>
<span class="t" style="left:408.71px;top:808px;font-size:16px;letter-spacing:0.000px;color:#b4b4b4;font-family:'Liberation Sans',sans-serif;transform:scaleX(1.097);">0</span>
<div class="abs" style="left:1296px;top:129px;width:321px;height:32px;background:#2f2f2f;"></div>
<svg class="abs" style="left:1296px;top:129px;" width="10" height="10" viewBox="0 0 10 10"><path d="M0 0H10L0 10Z" fill="#0070e0"/></svg>
<svg class="abs" style="left:1302px;top:140px;" width="14" height="10" viewBox="0 0 14 10"><path d="M1.600 1.500H12.600L7.100 8.500Z" fill="#8c8c8c" stroke="#8c8c8c" stroke-width="1.200" stroke-linejoin="round"/></svg>
<span class="t" style="left:1323.90px;top:139px;font-size:12.5px;letter-spacing:-0.775px;color:#e0e0e0;font-family:'Liberation Sans',sans-serif;font-weight:700;">Color</span>
<div class="abs" style="left:1296px;top:162px;width:321px;height:33px;background:#242424;"></div>
<div class="abs" style="left:1424px;top:162px;width:1px;height:33px;background:#1a1a1a;"></div>
<div class="abs" style="left:1589px;top:162px;width:1px;height:33px;background:#1a1a1a;"></div>
<span class="t" style="left:1324.30px;top:173px;font-size:12.5px;letter-spacing:0.039px;color:#c8c8c8;font-family:'Liberation Sans',sans-serif;">Adjust Hue</span>
<div class="abs" style="left:1440px;top:167px;width:146px;height:23px;background:#0f0f0f;border:1px solid #343434;border-radius:5px;"></div>
<span class="t" style="left:1451.03px;top:173px;font-size:12.5px;letter-spacing:0.200px;color:#ececec;font-family:'Liberation Sans',sans-serif;">0.0</span>
<div class="abs" style="left:1296px;top:196px;width:321px;height:33px;background:#242424;"></div>
<div class="abs" style="left:1424px;top:196px;width:1px;height:33px;background:#1a1a1a;"></div>
<div class="abs" style="left:1589px;top:196px;width:1px;height:33px;background:#1a1a1a;"></div>
<span class="t" style="left:1324.30px;top:207px;font-size:12.5px;letter-spacing:0.169px;color:#c8c8c8;font-family:'Liberation Sans',sans-serif;">Adjust Saturation</span>
<div class="abs" style="left:1440px;top:201px;width:146px;height:23px;background:#0f0f0f;border:1px solid #343434;border-radius:5px;"></div>
<div class="abs" style="left:1442px;top:203px;width:142px;height:19px;background:#393939;border-radius:3.500px;"></div>
<span class="t" style="left:1451.33px;top:207px;font-size:12.5px;letter-spacing:0.050px;color:#ececec;font-family:'Liberation Sans',sans-serif;">1.0</span>
<div class="abs" style="left:1296px;top:230px;width:321px;height:32px;background:#242424;"></div>
<div class="abs" style="left:1424px;top:230px;width:1px;height:32px;background:#1a1a1a;"></div>
<div class="abs" style="left:1589px;top:230px;width:1px;height:32px;background:#1a1a1a;"></div>
<span class="t" style="left:1324.30px;top:241px;font-size:12.5px;letter-spacing:0.034px;color:#c8c8c8;font-family:'Liberation Sans',sans-serif;">Adjust Brightne...</span>
<div class="abs" style="left:1440px;top:235px;width:146px;height:23px;background:#0f0f0f;border:1px solid #343434;border-radius:5px;"></div>
<div class="abs" style="left:1442px;top:237px;width:142px;height:19px;background:#393939;border-radius:3.500px;"></div>
<span class="t" style="left:1451.33px;top:241px;font-size:12.5px;letter-spacing:0.050px;color:#ececec;font-family:'Liberation Sans',sans-serif;">1.0</span>
<div class="abs" style="left:1296px;top:263px;width:321px;height:33px;background:#242424;"></div>
<div class="abs" style="left:1424px;top:263px;width:1px;height:33px;background:#1a1a1a;"></div>
<div class="abs" style="left:1589px;top:263px;width:1px;height:33px;background:#1a1a1a;"></div>
<span class="t" style="left:1324.30px;top:274px;font-size:12.5px;letter-spacing:0.034px;color:#c8c8c8;font-family:'Liberation Sans',sans-serif;">Adjust Brightne...</span>
<div class="abs" style="left:1440px;top:268px;width:146px;height:23px;background:#0f0f0f;border:1px solid #343434;border-radius:5px;"></div>
<div class="abs" style="left:1442px;top:270px;width:142px;height:19px;background:#393939;border-radius:3.500px;"></div>
<span class="t" style="left:1451.33px;top:274px;font-size:12.5px;letter-spacing:0.050px;color:#ececec;font-family:'Liberation Sans',sans-serif;">1.0</span>
<div class="abs" style="left:1296px;top:297px;width:321px;height:33px;background:#242424;"></div>
<div class="abs" style="left:1424px;top:297px;width:1px;height:33px;background:#1a1a1a;"></div>
<div class="abs" style="left:1589px;top:297px;width:1px;height:33px;background:#1a1a1a;"></div>
<span class="t" style="left:1324.30px;top:308px;font-size:12.5px;letter-spacing:0.166px;color:#c8c8c8;font-family:'Liberation Sans',sans-serif;">Adjust Vibrance</span>
<div class="abs" style="left:1440px;top:302px;width:146px;height:23px;background:#0f0f0f;border:1px solid #343434;border-radius:5px;"></div>
<span class="t" style="left:1451.03px;top:308px;font-size:12.5px;letter-spacing:0.200px;color:#ececec;font-family:'Liberation Sans',sans-serif;">0.0</span>
<div class="abs" style="left:1296px;top:331px;width:321px;height:33px;background:#242424;"></div>
<div class="abs" style="left:1424px;top:331px;width:1px;height:33px;background:#1a1a1a;"></div>
<div class="abs" style="left:1589px;top:331px;width:1px;height:33px;background:#1a1a1a;"></div>
<span class="t" style="left:1324.30px;top:342px;font-size:12.5px;letter-spacing:0.078px;color:#c8c8c8;font-family:'Liberation Sans',sans-serif;">Adjust Min Alpha</span>
<div class="abs" style="left:1440px;top:336px;width:146px;height:23px;background:#0f0f0f;border:1px solid #343434;border-radius:5px;"></div>
<span class="t" style="left:1451.03px;top:342px;font-size:12.5px;letter-spacing:0.200px;color:#ececec;font-family:'Liberation Sans',sans-serif;">0.0</span>
<div class="abs" style="left:1296px;top:365px;width:321px;height:32px;background:#242424;"></div>
<div class="abs" style="left:1424px;top:365px;width:1px;height:32px;background:#1a1a1a;"></div>
<div class="abs" style="left:1589px;top:365px;width:1px;height:32px;background:#1a1a1a;"></div>
<span class="t" style="left:1324.30px;top:376px;font-size:12.5px;letter-spacing:0.092px;color:#c8c8c8;font-family:'Liberation Sans',sans-serif;">Adjust Max Alpha</span>
<div class="abs" style="left:1440px;top:370px;width:146px;height:23px;background:#0f0f0f;border:1px solid #343434;border-radius:5px;"></div>
<div class="abs" style="left:1442px;top:372px;width:142px;height:19px;background:#393939;border-radius:3.500px;"></div>
<span class="t" style="left:1451.33px;top:376px;font-size:12.5px;letter-spacing:0.050px;color:#ececec;font-family:'Liberation Sans',sans-serif;">1.0</span>
<div class="abs" style="left:1296px;top:398px;width:321px;height:33px;background:#2f2f2f;"></div>
<svg class="abs" style="left:1302px;top:409.5px;" width="14" height="10" viewBox="0 0 14 10"><path d="M1.600 1.500H12.600L7.100 8.500Z" fill="#8c8c8c" stroke="#8c8c8c" stroke-width="1.200" stroke-linejoin="round"/></svg>
<span class="t" style="left:1323.65px;top:409px;font-size:12.5px;letter-spacing:-0.116px;color:#e0e0e0;font-family:'Liberation Sans',sans-serif;font-weight:700;">File Path</span>
<div class="abs" style="left:1296px;top:432px;width:321px;height:33px;background:#242424;"></div>
<div class="abs" style="left:1424px;top:432px;width:1px;height:33px;background:#1a1a1a;"></div>
<div class="abs" style="left:1589px;top:432px;width:1px;height:33px;background:#1a1a1a;"></div>
<span class="t" style="left:1323.90px;top:443px;font-size:12.5px;letter-spacing:0.065px;color:#c8c8c8;font-family:'Liberation Sans',sans-serif;">Source File</span>
<div class="abs" style="left:1436px;top:437px;width:76.500px;height:22px;overflow:hidden"><span class="t" style="left:4.50px;top:5px;font-size:12.5px;letter-spacing:0.085px;color:#c8c8c8;font-family:'Liberation Sans',sans-serif;">No Source Path Set</span></div>
<div class="abs" style="left:1512px;top:437px;width:49px;height:23px;background:#393939;border:1px solid #171717;border-radius:5px;"></div>
<span class="t" style="left:1531.47px;top:443px;font-size:12.5px;letter-spacing:0.075px;color:#ececec;font-family:'Liberation Sans',sans-serif;">...</span>
<svg class="abs" style="left:1565px;top:439px;" width="18" height="18" viewBox="0 0 18 18"><path d="M3.700 3.700L13.300 13.300M13.300 3.700L3.700 13.300" stroke="#ffffff" stroke-width="3.400" stroke-linecap="round" fill="none"/></svg>
<div class="abs" style="left:1296px;top:466px;width:321px;height:33px;background:#242424;"></div>
<div class="abs" style="left:1424px;top:466px;width:1px;height:33px;background:#1a1a1a;"></div>
<div class="abs" style="left:1589px;top:466px;width:1px;height:33px;background:#1a1a1a;"></div>
<svg class="abs" style="left:1540px;top:473px;" width="44" height="18" viewBox="0 0 44 18">
<path d="M8.600 3.400V13.500" stroke="#8a8a8a" stroke-width="3.800" stroke-linecap="round" fill="none"/><path d="M3.200 9.300L8.600 14.200L14 9.300" fill="none" stroke="#8a8a8a" stroke-width="3.300" stroke-linecap="round" stroke-linejoin="round"/>
<path d="M33.400 14V4" stroke="#8a8a8a" stroke-width="3.800" stroke-linecap="round" fill="none"/><path d="M28 8.200L33.400 3.300L38.800 8.200" fill="none" stroke="#8a8a8a" stroke-width="3.300" stroke-linecap="round" stroke-linejoin="round"/></svg>
<div class="abs" style="left:5px;top:833px;width:171px;height:41px;background:#242424;"></div>
<div class="abs" style="left:179px;top:833px;width:137px;height:41px;background:#242424;"></div>
<div class="abs" style="left:318px;top:833px;width:502px;height:41px;background:#242424;"></div>
<div class="abs" style="left:822px;top:833px;width:439px;height:41px;background:#242424;"></div>
<div class="abs" style="left:1264px;top:833px;width:137px;height:41px;background:#242424;"></div>
<div class="abs" style="left:1404px;top:833px;width:214px;height:41px;background:#242424;"></div>
<svg class="abs" style="left:0;top:833px" width="1625" height="41" viewBox="0 833 1625 41"><g transform="translate(17.800,843) scale(0.82)"><path d="M0 1.200Q0 0 1.200 0H7.800L12.700 5H0Z" fill="#737373"/><path d="M0 5.900H22.700Q23.900 5.900 23.900 7.100V9.500A8 8 0 0 0 11.500 19.500L8.600 22.300H1.200Q0 22.300 0 21.100Z" fill="#c4c4c4"/><circle cx="18.600" cy="15.400" r="5.400" fill="none" stroke="#c4c4c4" stroke-width="1.800"/><path d="M14.600 19.600L10.200 24.300" stroke="#c4c4c4" stroke-width="2" fill="none"/></g><path d="M193.200 844H208.800V863.200H193.200Z" fill="#c4c4c4"/><path d="M196.600 843.100H199.500V847.600H196.600ZM202.800 843.100H205.700V847.600H202.800Z" fill="#6a6a6a"/><path d="M196.300 852.500L200.300 855.500L196.300 858.500" fill="none" stroke="#242424" stroke-width="1.600"/><path d="M201.200 858.600H205.800" stroke="#242424" stroke-width="1.500"/><rect x="336.600" y="845.700" width="18.800" height="15.600" fill="none" stroke="#c4c4c4" stroke-width="1.400"/><rect x="335.900" y="845" width="20.200" height="4" fill="#c4c4c4"/><path d="M339.900 851.300L345.400 854.450L339.900 857.600" fill="none" stroke="#c4c4c4" stroke-width="1.400"/><path d="M347.200 857.500H352" stroke="#c4c4c4" stroke-width="1.400"/><path d="M407.300 850.500L412.300 855.300L417.300 850.500" fill="none" stroke="#d8d8d8" stroke-width="1.800" stroke-linecap="round" stroke-linejoin="round"/><rect x="434.800" y="840.700" width="373.700" height="25.600" rx="5" fill="#0e0e0e" stroke="#343434"/><path d="M1279 844H1292.500L1295.300 847V860.600H1279Z" fill="#727272"/><rect x="1281.900" y="844" width="9.100" height="5.800" fill="#c4c4c4"/><rect x="1289" y="845" width="1.100" height="4" fill="#1a1a1a"/><rect x="1281.900" y="854.100" width="9" height="6.500" fill="#c4c4c4"/><path d="M1293.900 858.200L1293.90 852.80M1293.900 858.200L1299.04 856.53M1293.900 858.200L1297.07 862.57M1293.900 858.200L1290.73 862.57M1293.900 858.200L1288.76 856.53" stroke="#242424" stroke-width="4.600" stroke-linecap="round" fill="none"/><path d="M1293.900 858.200L1293.90 852.80M1293.900 858.200L1299.04 856.53M1293.900 858.200L1297.07 862.57M1293.900 858.200L1290.73 862.57M1293.900 858.200L1288.76 856.53" stroke="#e2e2e2" stroke-width="2.200" fill="none"/><path d="M1427 846.800V859.600M1427 853.500H1432.500Q1436 853.500 1436.800 849.500" fill="none" stroke="#c4c4c4" stroke-width="1.300"/><circle cx="1427" cy="846.800" r="3.100" fill="#c4c4c4"/><circle cx="1427" cy="859.600" r="3.100" fill="#c4c4c4"/><circle cx="1437.100" cy="846.800" r="3.100" fill="#c4c4c4"/><path d="M1582.900 850.300L1588.100 855.300L1593.300 850.300" fill="none" stroke="#d8d8d8" stroke-width="1.800" stroke-linecap="round" stroke-linejoin="round"/></svg>
<span class="t" style="left:42.55px;top:846px;font-size:16px;letter-spacing:0.713px;color:#c4c4c4;font-family:'Liberation Sans',sans-serif;">Content Drawer</span>
<span class="t" style="left:215.75px;top:846px;font-size:16px;letter-spacing:0.958px;color:#c4c4c4;font-family:'Liberation Sans',sans-serif;">Output Log</span>
<span class="t" style="left:360.85px;top:846px;font-size:16px;letter-spacing:1.250px;color:#c4c4c4;font-family:'Liberation Sans',sans-serif;">Cmd</span>
<span class="t" style="left:444.98px;top:845px;font-size:15px;letter-spacing:0.044px;color:#585858;font-family:'Liberation Mono',monospace;">Enter Console Command</span>
<span class="t" style="left:1305.38px;top:846px;font-size:16px;letter-spacing:0.666px;color:#c4c4c4;font-family:'Liberation Sans',sans-serif;">1 Unsaved</span>
<span class="t" style="left:1447.25px;top:846px;font-size:16px;letter-spacing:0.758px;color:#c4c4c4;font-family:'Liberation Sans',sans-serif;">Revision Control</span>
</div>
</body>
</html>
